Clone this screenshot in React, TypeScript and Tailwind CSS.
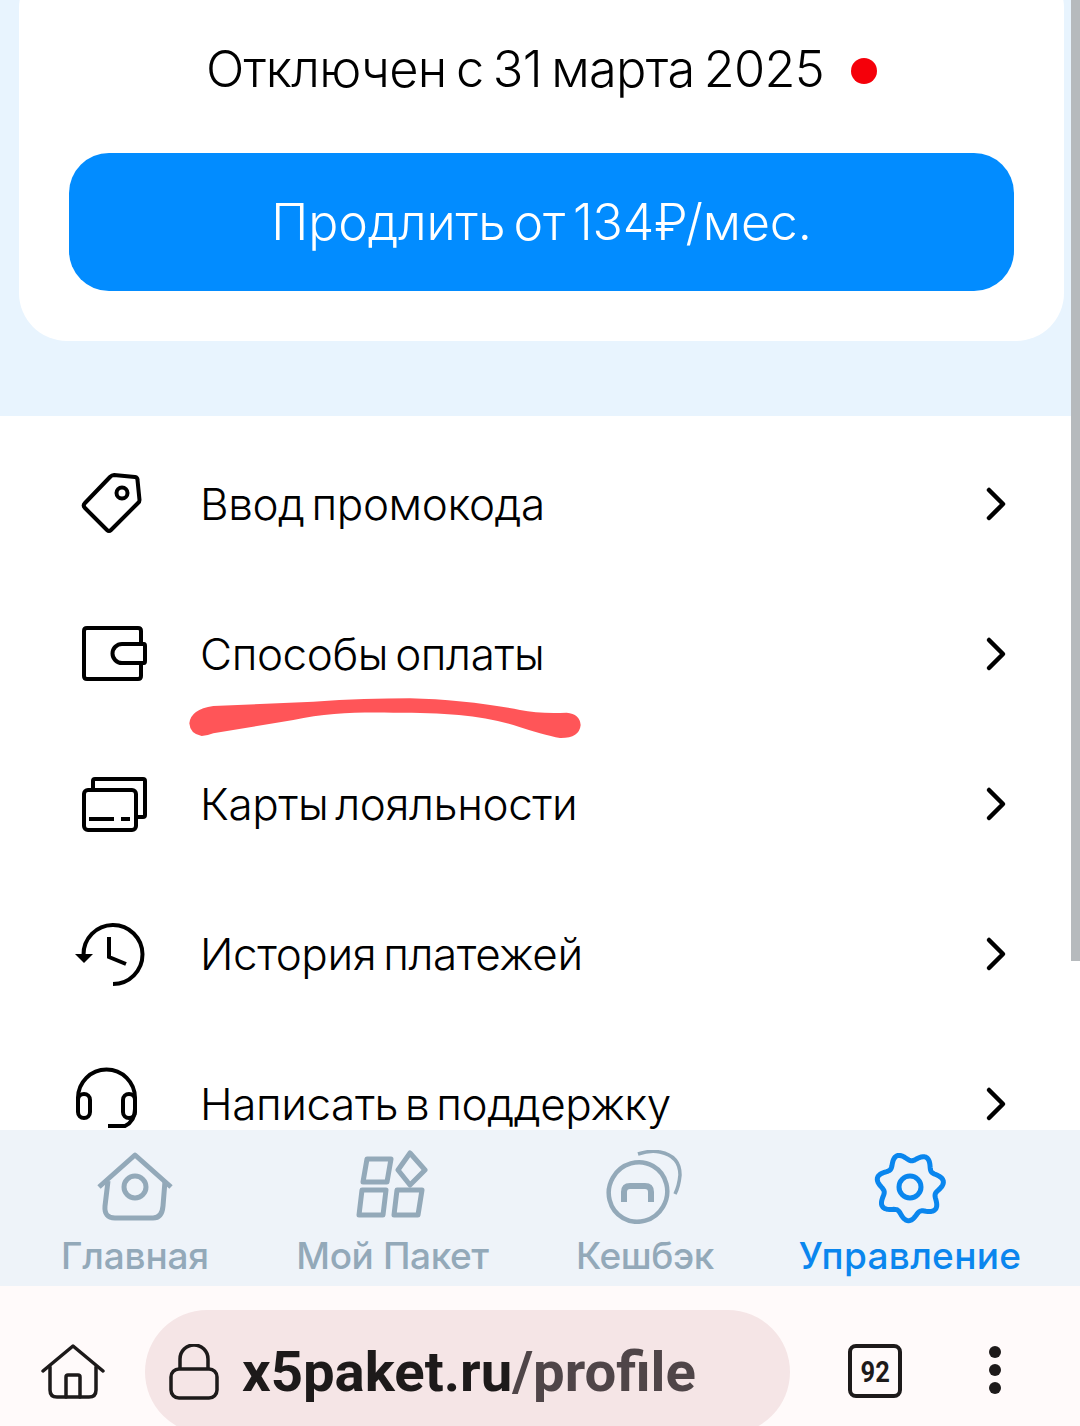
import React from 'react';

const rows = [
  { label: 'Ввод промокода', icon: <TagIcon /> },
  { label: 'Способы оплаты', icon: <WalletIcon /> },
  { label: 'Карты лояльности', icon: <CardsIcon /> },
  { label: 'История платежей', icon: <HistoryIcon /> },
  { label: 'Написать в поддержку', icon: <HeadsetIcon /> },
];

// wavy gear outline, seven lobes
function gearPath() {
  const pts: string[] = [];
  for (let i = 0; i < 140; i++) {
    const a = (i / 140) * Math.PI * 2;
    const r = 30 + 3.8 * Math.cos(7 * (a - (93 * Math.PI) / 180));
    pts.push(`${(38 + r * Math.cos(a)).toFixed(2)} ${(37 + r * Math.sin(a)).toFixed(2)}`);
  }
  return `M${pts.join(' L')} Z`;
}

function TagIcon() {
  return (
    <svg width="80" height="80" viewBox="0 0 80 80" fill="none" stroke="#000" strokeWidth="4" strokeLinejoin="round">
      <path d="M15 38 L40 12 Q42 10 44 10 L65 12 Q67.5 12.5 67.5 15 L69.5 35 Q69.5 37 68 38 L41 65 Q39 67 37 65 L15 43 Q12.5 40.5 15 38 Z" />
      <circle cx="52" cy="28" r="5.5" />
    </svg>
  );
}

function WalletIcon() {
  return (
    <svg width="80" height="80" viewBox="0 0 80 80" fill="none" stroke="#000" strokeWidth="4" strokeLinejoin="round">
      <path d="M71 29 V16 Q71 13 68 13 H17 Q14 13 14 16 V61 Q14 64 17 64 H68 Q71 64 71 61 V48" />
      <path d="M74 29 H52 A9.5 9.5 0 0 0 52 48 H74 Q75 48 75 46 V31 Q75 29 74 29 Z" />
    </svg>
  );
}

function CardsIcon() {
  return (
    <svg width="80" height="80" viewBox="0 0 80 80" fill="none" stroke="#000" strokeWidth="4" strokeLinejoin="round">
      <path d="M23 25 V16 Q23 14 25 14 H73 Q75 14 75 16 V50 Q75 52 73 52 H68" />
      <rect x="14" y="25" width="52" height="40" rx="4" />
      <path d="M19 54 H44 M51 54 H60" />
    </svg>
  );
}

function HistoryIcon() {
  return (
    <svg width="80" height="80" viewBox="0 0 80 80" fill="none" stroke="#000" strokeWidth="4">
      <path d="M13.5 40 A29.5 29.5 0 1 1 43 69" />
      <path d="M5 39 H23 L14 48 Z" fill="#000" stroke="none" />
      <path d="M39 22 V42 L56 49" />
    </svg>
  );
}

function HeadsetIcon() {
  return (
    <svg width="80" height="80" viewBox="0 0 80 80" fill="none" stroke="#000" strokeWidth="4">
      <path d="M8 40 V33 A28.5 28.5 0 0 1 65 33 V40" />
      <rect x="8" y="29" width="12" height="24" rx="6" />
      <rect x="53" y="29" width="12" height="24" rx="6" />
      <path d="M65 44 Q65 56 55 61 H38" />
    </svg>
  );
}

function ChevronRight() {
  return (
    <svg className="-mt-[2px]" width="24" height="36" viewBox="0 0 24 36" fill="none" stroke="#000" strokeWidth="4.5" strokeLinecap="round" strokeLinejoin="round">
      <path d="M5 4 L19 18 L5 32" />
    </svg>
  );
}

function NavHome() {
  return (
    <svg className="-mt-[3px]" width="80" height="72" viewBox="0 0 80 72" fill="none" stroke="#93a9b9" strokeWidth="5" strokeLinejoin="round">
      <path d="M4 37 L40 5 L76 37" />
      <path d="M13 31 L10 56 Q9 68 20 68 H58 Q67 68 68 56 L70 31" />
      <circle cx="40" cy="37" r="11" />
    </svg>
  );
}

function NavPackage() {
  return (
    <svg className="-mt-[3px]" width="76" height="72" viewBox="0 0 76 72" fill="none" stroke="#93a9b9" strokeWidth="5" strokeLinejoin="round">
      <path d="M12 9 H36 L32 32 H8 Z" />
      <path d="M55 3 L70 20 L55 35 L43 20 Z" />
      <path d="M7 40 H31 L28 65 H4 Z" />
      <path d="M42 40 H67 L63 65 H39 Z" />
    </svg>
  );
}

function NavCashback() {
  return (
    <svg width="80" height="74" viewBox="0 0 80 74" fill="none" stroke="#93a9b9" strokeWidth="4.5">
      <ellipse cx="33" cy="42" rx="29" ry="30" transform="rotate(30 33 42)" />
      <path d="M33 4 Q45 0 55 2 Q75 6 75 25 Q74 36 70 44" strokeWidth="3.5" />
      <path d="M19 52 V42 Q19 36 25 36 H40 Q46 36 46 42 V52" strokeWidth="6" />
    </svg>
  );
}

function NavGear() {
  return (
    <svg width="76" height="74" viewBox="0 0 76 74" fill="none" stroke="#0a86ee" strokeWidth="5" strokeLinejoin="round">
      <path d={gearPath()} />
      <circle cx="38" cy="37" r="11" />
    </svg>
  );
}

function BrowserHome() {
  return (
    <svg width="64" height="56" viewBox="0 0 64 56" fill="none" stroke="#1d1a1a" strokeWidth="3.5" strokeLinejoin="round" strokeLinecap="round">
      <path d="M2 27 L32 2 L62 27" />
      <path d="M9 23 V46 Q9 53 16 53 H48 Q55 53 55 46 V23" />
      <path d="M25 53 V33 Q25 31 27 31 H37 Q39 31 39 33 V53" />
    </svg>
  );
}

function LockIcon() {
  return (
    <svg width="50" height="56" viewBox="0 0 50 56" fill="none" stroke="#1d1a1a" strokeWidth="3.5">
      <path d="M11 25 V15 A14 14 0 0 1 39 15 V25" />
      <rect x="2" y="25" width="46" height="29" rx="8" />
    </svg>
  );
}

export default function App() {
  return (
    <div className="relative flex h-[1426px] w-[1080px] flex-col overflow-hidden bg-white font-['Inter',sans-serif]">
      <main className="h-[1130px] shrink-0 overflow-hidden">
        <section className="flex h-[416px] flex-col bg-[#e8f4fe] px-[19px]">
          <div className="-mt-[40px] flex h-[381px] w-[1045px] flex-col rounded-[48px] bg-white px-[50px] pt-[79px]">
            <div className="flex h-[60px] items-center justify-center text-[50.5px] font-light tracking-[-0.75px] [word-spacing:-4px] text-black">
              <span>Отключен с 31 марта 2025</span>
              <span className="ml-[27px] mt-[4px] h-[26px] w-[26px] rounded-full bg-[#f5000a]" />
            </div>
            <button className="mt-[54px] flex h-[138px] w-[945px] items-center justify-center rounded-[40px] bg-[#028cff] text-[50px] font-light tracking-[-0.1px] [word-spacing:-6px] text-white">
              Продлить от 134₽/мес.
            </button>
          </div>
        </section>
        <ul className="pt-[14px]">
          {rows.map((r) => (
            <li key={r.label} className="flex h-[150px] items-center pl-[70px] pr-[72px]">
              <span className="flex h-[80px] w-[80px] shrink-0 items-center justify-center">{r.icon}</span>
              <span className="-mt-[2px] ml-[50px] flex-1 text-[44px] font-light tracking-[-0.4px] [word-spacing:-5px] text-black">{r.label}</span>
              <ChevronRight />
            </li>
          ))}
        </ul>
      </main>

      <nav className="flex h-[156px] shrink-0 bg-[#eef3f9] pt-[20px] text-[37px] font-medium leading-[42px] tracking-[-0.2px]">
        <a className="flex w-[270px] shrink-0 flex-col items-center text-[#93a9b9]">
          <span className="flex h-[74px] items-center"><NavHome /></span>
          <span className="mt-[11px]">Главная</span>
        </a>
        <a className="flex w-[245px] shrink-0 flex-col items-center text-[#93a9b9]">
          <span className="flex h-[74px] items-center"><NavPackage /></span>
          <span className="mt-[11px] tracking-[-0.4px]">Мой Пакет</span>
        </a>
        <a className="flex w-[260px] shrink-0 flex-col items-center text-[#93a9b9]">
          <span className="flex h-[74px] items-center"><NavCashback /></span>
          <span className="mt-[11px] tracking-[-0.4px]">Кешбэк</span>
        </a>
        <a className="flex w-[270px] shrink-0 flex-col items-center text-[#0a86ee]">
          <span className="flex h-[74px] items-center"><NavGear /></span>
          <span className="mt-[11px] tracking-[0.3px]">Управление</span>
        </a>
      </nav>

      <footer className="flex h-[140px] shrink-0 items-center bg-[#fffafa] pl-[41px] pt-[32px]">
        <BrowserHome />
        <div className="ml-[40px] flex h-[124px] w-[645px] shrink-0 items-center rounded-full bg-[#f5e5e6] pl-[24px]">
          <LockIcon />
          <span className="ml-[23px] font-['Roboto',sans-serif] text-[56.3px] font-bold text-[#1d1a1a]">
            x5paket.ru<span className="text-[#4f4548]">/profile</span>
          </span>
        </div>
        <div className="-mt-[2px] ml-[58px] flex h-[54px] w-[54px] shrink-0 items-center justify-center rounded-[8px] border-[4px] border-[#1d1a1a] font-['Roboto',sans-serif] text-[30px] font-bold text-[#1d1a1a]">
          <span className="scale-x-[0.85]">92</span>
        </div>
        <div className="-mt-[4px] ml-[87px] flex shrink-0 flex-col gap-[6px]">
          <span className="h-[12px] w-[12px] rounded-full bg-[#1d1a1a]" />
          <span className="h-[12px] w-[12px] rounded-full bg-[#1d1a1a]" />
          <span className="h-[12px] w-[12px] rounded-full bg-[#1d1a1a]" />
        </div>
      </footer>

      {/* scrollbar over the page */}
      <div className="absolute right-0 top-0 h-[961px] w-[9px] bg-[#b6babd]" />

      {/* red marker stroke drawn on the screenshot */}
      <svg className="absolute left-[180px] top-[690px]" width="410" height="60" viewBox="0 0 1230 180" fill="#ff5558">
        <path d="M28 100 Q32 58 100 48 L400 35 Q560 25 690 25 C800 27 930 42 1020 60 Q1080 72 1160 68 Q1200 72 1202 105 Q1198 145 1140 144 Q1090 135 1000 105 C900 75 800 68 640 68 C540 66 440 68 340 90 L100 130 Q80 138 65 138 Q30 132 28 100 Z" />
      </svg>
    </div>
  );
}
